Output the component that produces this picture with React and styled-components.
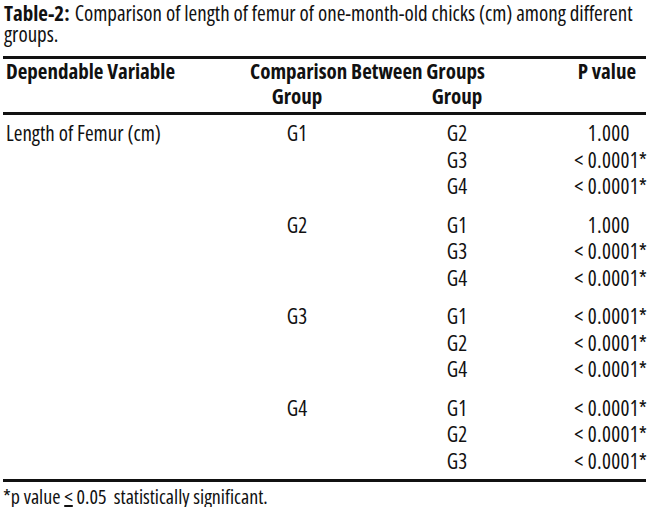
import React from "react";
import styled, { createGlobalStyle } from "styled-components";

const Global = createGlobalStyle`
  html, body { margin: 0; padding: 0; background: #fff; }
  body { font-family: "Open Sans", "Liberation Sans", sans-serif; font-stretch: 85%; color: #111; }
`;

const Page = styled.div`
  width: 650px;
  padding: 3px 4px 0 3px;
  box-sizing: border-box;
`;

const Caption = styled.div`
  font-size: 21px;
  line-height: 21px;
  font-stretch: 81%;
  padding-left: 1px;
`;

const Label = styled.span`
  display: inline-block;
  line-height: 21px;
  font-weight: 700;
  margin-right: 5px;
`;

const Table = styled.div`
  margin-top: 11px;
  border-top: 3px solid #111;
  border-bottom: 3px solid #111;
`;

const Grid = styled.div`
  display: grid;
  grid-template-columns: 244px 100px 220px 78px;
  align-items: center;
`;

const Head = styled(Grid)`
  border-bottom: 3px solid #111;
  padding: 0 0 3px;
  font-weight: 700;
  font-size: 21px;
  line-height: 25px;
  font-stretch: 84%;
  grid-auto-rows: 25px;
`;

const HeadCell = styled.div`
  padding-left: ${(p) => p.$pl || 0}px;
  text-align: ${(p) => p.$align || "left"};
  grid-column: ${(p) => p.$span || "auto"};
  padding-right: ${(p) => p.$pr || 0}px;
  white-space: nowrap;
`;

const Body = styled.div`
  display: flex;
  flex-direction: column;
  gap: 12px;
  padding: 5px 0 5px;
`;

const Group = styled(Grid)`
  grid-auto-rows: 26.5px;
  line-height: 26px;
  font-size: 21px;
`;

const Cell = styled.div`
  text-align: ${(p) => p.$align || "left"};
  padding-left: ${(p) => p.$pl || 0}px;
  white-space: nowrap;
`;

const PCell = styled.div`
  display: grid;
  grid-template-columns: 30px 1fr;
  letter-spacing: 0.3px;
`;

const Int = styled.span`
  text-align: right;
  white-space: pre;
`;

const Frac = styled.span`
  white-space: pre;
`;

const Foot = styled.div`
  font-size: 20px;
  line-height: 20px;
  margin-top: 5px;
`;

const Le = styled.span`
  text-decoration: underline;
`;

const data = [
  ["G1", [["G2", "1", ".000"], ["G3", "< 0", ".0001*"], ["G4", "< 0", ".0001*"]]],
  ["G2", [["G1", "1", ".000"], ["G3", "< 0", ".0001*"], ["G4", "< 0", ".0001*"]]],
  ["G3", [["G1", "< 0", ".0001*"], ["G2", "< 0", ".0001*"], ["G4", "< 0", ".0001*"]]],
  ["G4", [["G1", "< 0", ".0001*"], ["G2", "< 0", ".0001*"], ["G3", "< 0", ".0001*"]]],
];

export default function App() {
  return (
    <Page>
      <Global />
      <Caption>
        <Label>Table-2:</Label>Comparison of length of femur of one-month-old chicks (cm) among different groups.
      </Caption>
      <Table>
        <Head>
          <HeadCell $pl={3}>Dependable Variable</HeadCell>
          <HeadCell $span="2 / 4" $pl={3}>Comparison Between Groups</HeadCell>
          <HeadCell $align="right" $pr={9}>P value</HeadCell>
          <HeadCell />
          <HeadCell $align="center">Group</HeadCell>
          <HeadCell $align="center">Group</HeadCell>
          <HeadCell />
        </Head>
        <Body>
          {data.map(([g, rows], gi) => (
            <Group key={g}>
              {rows.map(([g2, a, b], ri) => (
                <React.Fragment key={g2}>
                  <Cell $pl={3}>{gi === 0 && ri === 0 ? "Length of Femur (cm)" : ""}</Cell>
                  <Cell $align="center">{ri === 0 ? g : ""}</Cell>
                  <Cell $align="center">{g2}</Cell>
                  <PCell>
                    <Int>{a}</Int>
                    <Frac>{b}</Frac>
                  </PCell>
                </React.Fragment>
              ))}
            </Group>
          ))}
        </Body>
      </Table>
      <Foot>
        *p value <Le>&lt;</Le> 0.05&nbsp; statistically significant.
      </Foot>
    </Page>
  );
}
